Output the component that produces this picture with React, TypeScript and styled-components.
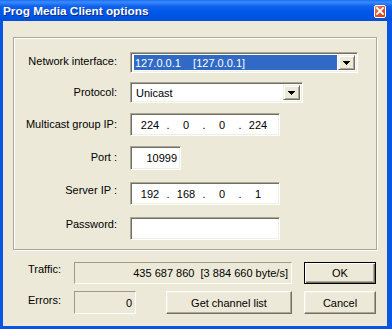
import styled, { createGlobalStyle } from "styled-components";

const GlobalStyle = createGlobalStyle`
  html, body {
    margin: 0;
    padding: 0;
    background: #ffffff;
  }
  * {
    box-sizing: border-box;
  }
`;

const uiFont = `"Liberation Sans", Arial, sans-serif`;

const Window = styled.div`
  width: 392px;
  height: 329px;
  display: flex;
  flex-direction: column;
  background: #0a56e4;
  font-family: ${uiFont};
  font-size: 11px;
  color: #000000;
`;

const TitleBar = styled.div`
  height: 21px;
  display: flex;
  align-items: center;
  justify-content: space-between;
  padding: 0 6px 0 3px;
  background: linear-gradient(
    to bottom,
    #1c6ef3 0%,
    #3a8bfc 10%,
    #0f62ee 30%,
    #0058ea 55%,
    #0054e3 80%,
    #004fd8 100%
  );
`;

const TitleText = styled.span`
  color: #ffffff;
  font-weight: bold;
  font-size: 11.8px;
  line-height: 14px;
  padding-top: 1px;
  text-shadow: 1px 1px 0 #0a2f8c;
`;

const CloseButton = styled.div`
  width: 12px;
  height: 13px;
  margin-top: 1px;
  border: 1px solid #ffffff;
  border-radius: 2px;
  background: linear-gradient(135deg, #f08a6a 0%, #e2532f 45%, #c8401c 100%);
  display: flex;
  align-items: center;
  justify-content: center;
`;

const Body = styled.div`
  flex: 1;
  margin: 0 5px 3px 3px;
  background: #ece9d8;
  padding: 16px 10px 0 10px;
  display: flex;
  flex-direction: column;
`;

const GroupBox = styled.div`
  height: 213px;
  border: 1px solid #aca899;
  box-shadow: inset 1px 1px 0 #ffffff, 1px 1px 0 #ffffff;
  padding-top: 14px;
  display: flex;
  flex-direction: column;
`;

const Row = styled.div<{ $top: number }>`
  display: flex;
  align-items: flex-start;
  margin-top: ${(p) => p.$top}px;
`;

const Label = styled.div<{ $dy: number }>`
  width: 103px;
  margin-right: 13px;
  text-align: right;
  line-height: 14px;
  white-space: pre;
  padding-top: ${(p) => p.$dy}px;
`;

const Sunken = styled.div<{ $w: number; $h: number }>`
  width: ${(p) => p.$w}px;
  height: ${(p) => p.$h}px;
  background: #ffffff;
  border-top: 1px solid #aca899;
  border-left: 1px solid #aca899;
  border-bottom: 1px solid #ffffff;
  border-right: 1px solid #ffffff;
  box-shadow: inset 1px 1px 0 #716f64, inset -1px -1px 0 #f1efe2;
  display: flex;
  align-items: center;
  line-height: 14px;
`;

const ComboInner = styled.div`
  flex: 1;
  height: 100%;
  display: flex;
  align-items: stretch;
  padding: 2px;
`;

const ComboValue = styled.div<{ $selected?: boolean }>`
  flex: 1;
  display: flex;
  align-items: center;
  padding-left: ${(p) => (p.$selected ? "1px" : "2px")};
  margin: 0 1px;
  white-space: pre;
  background: ${(p) => (p.$selected ? "#316ac5" : "transparent")};
  color: ${(p) => (p.$selected ? "#ffffff" : "#000000")};
`;

const DropButton = styled.div`
  width: 17px;
  background: #ece9d8;
  border-top: 1px solid #f1efe2;
  border-left: 1px solid #f1efe2;
  border-bottom: 1px solid #716f64;
  border-right: 1px solid #716f64;
  box-shadow: inset 1px 1px 0 #ffffff, inset -1px -1px 0 #aca899;
  display: flex;
  align-items: center;
  justify-content: center;
`;

const IpField = styled.div`
  display: flex;
  align-items: center;
  padding-left: 4px;
`;

const IpPart = styled.span`
  width: 30px;
  text-align: center;
`;

const IpDot = styled.span`
  width: 6px;
  text-align: center;
`;

const FieldText = styled.div`
  flex: 1;
  text-align: right;
  padding-right: 3px;
`;

const Footer = styled.div`
  margin-top: 12px;
  padding-left: 15px;
  display: grid;
  grid-template-columns: 46px 218px 84px;
  grid-template-rows: 22px 23px;
  row-gap: 7px;
`;

const FootLabel = styled.div<{ $dy: number }>`
  line-height: 14px;
  padding-top: ${(p) => p.$dy}px;
`;

const StaticBox = styled.div<{ $w?: number }>`
  width: ${(p) => (p.$w ? `${p.$w}px` : "100%")};
  height: 100%;
  border-top: 1px solid #9d9a8c;
  border-left: 1px solid #9d9a8c;
  border-bottom: 1px solid #ffffff;
  border-right: 1px solid #ffffff;
  display: flex;
  align-items: center;
  justify-content: flex-end;
  padding-right: 3px;
  line-height: 14px;
  white-space: pre;
`;

const ErrorCell = styled.div`
  display: flex;
  justify-content: space-between;
`;

const Button = styled.div<{ $w: number; $default?: boolean }>`
  width: ${(p) => p.$w}px;
  height: 100%;
  justify-self: end;
  display: flex;
  align-items: center;
  justify-content: center;
  background: #ece9d8;
  border: 1px solid;
  border-color: ${(p) =>
    p.$default ? "#000000" : "#ffffff #716f64 #716f64 #ffffff"};
  box-shadow: ${(p) =>
    p.$default
      ? "inset 1px 1px 0 #ffffff, inset -1px -1px 0 #716f64, inset -2px -2px 0 #aca899"
      : "inset -1px -1px 0 #aca899, inset 1px 1px 0 #f1efe2"};
  line-height: 14px;
`;

const Arrow = () => (
  <svg width="7" height="4" viewBox="0 0 7 4">
    <path d="M0 0h7v1H0zM1 1h5v1H1zM2 2h3v1H2zM3 3h1v1H3z" fill="#000" />
  </svg>
);

const CloseX = () => (
  <svg width="8" height="8" viewBox="0 0 8 8">
    <path
      d="M1 1L7 7M7 1L1 7"
      stroke="#ffffff"
      strokeWidth="1.8"
      strokeLinecap="square"
    />
  </svg>
);

function IpAddress({ parts }: { parts: string[] }) {
  return (
    <IpField>
      {parts.map((p, i) => (
        <span key={i} style={{ display: "contents" }}>
          {i > 0 && <IpDot>.</IpDot>}
          <IpPart>{p}</IpPart>
        </span>
      ))}
    </IpField>
  );
}

export default function App() {
  return (
    <>
      <GlobalStyle />
      <Window>
        <TitleBar>
          <TitleText>Prog Media Client options</TitleText>
          <CloseButton>
            <CloseX />
          </CloseButton>
        </TitleBar>
        <Body>
          <GroupBox>
            <Row $top={0}>
              <Label $dy={2}>Network interface:</Label>
              <Sunken $w={228} $h={21}>
                <ComboInner>
                  <ComboValue $selected>127.0.0.1    [127.0.0.1]</ComboValue>
                  <DropButton>
                    <Arrow />
                  </DropButton>
                </ComboInner>
              </Sunken>
            </Row>
            <Row $top={9}>
              <Label $dy={3}>Protocol:</Label>
              <Sunken $w={173} $h={21}>
                <ComboInner>
                  <ComboValue>Unicast</ComboValue>
                  <DropButton>
                    <Arrow />
                  </DropButton>
                </ComboInner>
              </Sunken>
            </Row>
            <Row $top={10}>
              <Label $dy={4}>Multicast group IP:</Label>
              <Sunken $w={150} $h={23}>
                <IpAddress parts={["224", "0", "0", "224"]} />
              </Sunken>
            </Row>
            <Row $top={10}>
              <Label $dy={4}>Port :</Label>
              <Sunken $w={51} $h={24}>
                <FieldText>10999</FieldText>
              </Sunken>
            </Row>
            <Row $top={12}>
              <Label $dy={1}>Server IP :</Label>
              <Sunken $w={150} $h={23}>
                <IpAddress parts={["192", "168", "0", "1"]} />
              </Sunken>
            </Row>
            <Row $top={12}>
              <Label $dy={0}>Password:</Label>
              <Sunken $w={150} $h={23} />
            </Row>
          </GroupBox>
          <Footer>
            <FootLabel $dy={-1}>Traffic:</FootLabel>
            <StaticBox>435 687 860  [3 884 660 byte/s]</StaticBox>
            <Button $w={72} $default>
              OK
            </Button>
            <FootLabel $dy={2}>Errors:</FootLabel>
            <ErrorCell>
              <StaticBox $w={62}>0</StaticBox>
              <Button $w={126}>Get channel list</Button>
            </ErrorCell>
            <Button $w={72}>Cancel</Button>
          </Footer>
        </Body>
      </Window>
    </>
  );
}
